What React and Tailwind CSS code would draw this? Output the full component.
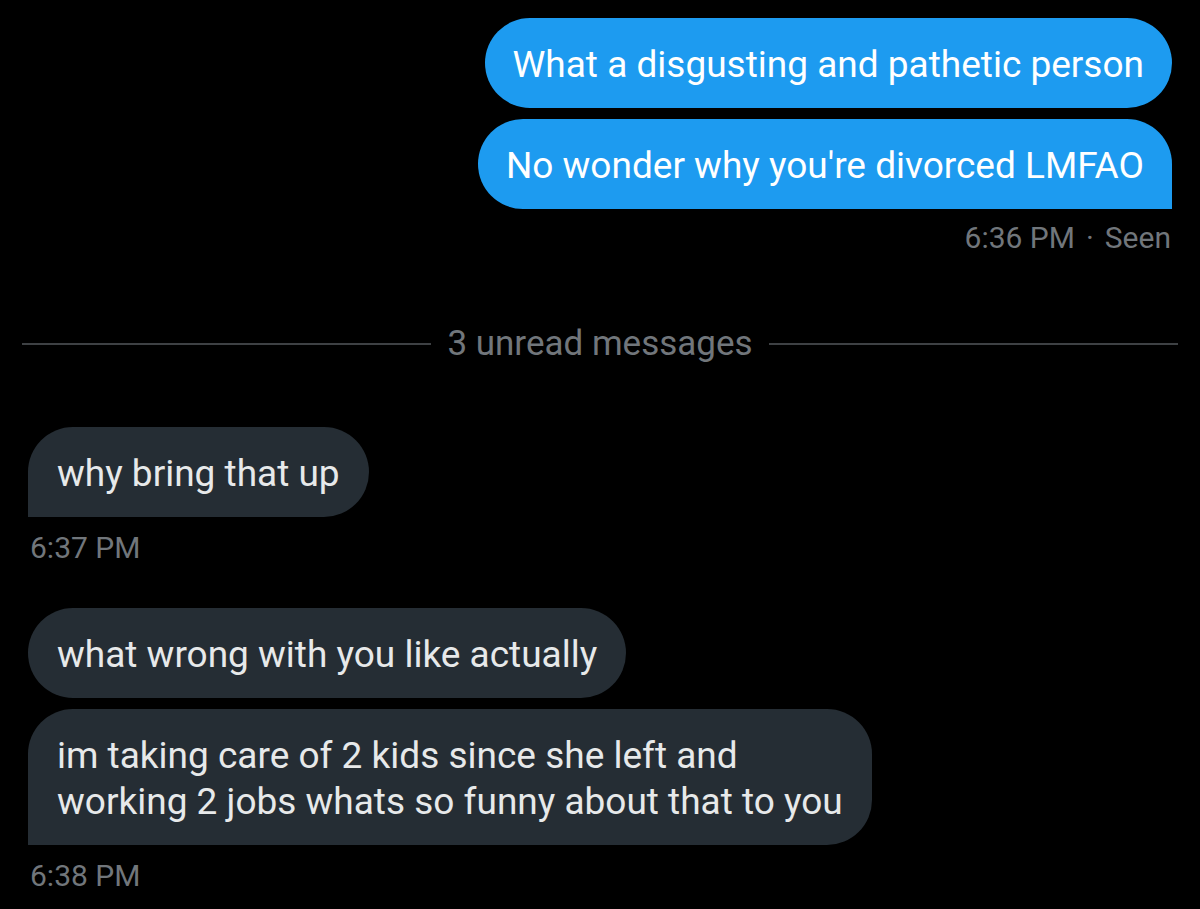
export default function App() {
  const font = { fontFamily: "Roboto, 'Liberation Sans', sans-serif" };
  return (
    <div className="w-[1200px] h-[909px] bg-black overflow-hidden" style={font}>
      <div className="flex flex-col pt-[18px]">
        {/* sent */}
        <div className="flex flex-col items-end pr-[28px] gap-[11px]">
          <div className="bg-[#1d9bf0] text-white rounded-[45px] px-[28px] pt-[23px] pb-[19px] text-[37px] leading-[48px]">
            What a disgusting and pathetic person
          </div>
          <div className="bg-[#1d9bf0] text-white rounded-[45px] rounded-br-none px-[28px] pt-[23px] pb-[19px] text-[37px] leading-[48px]">
            No wonder why you're divorced LMFAO
          </div>
        </div>
        <div className="flex justify-end pr-[29px] mt-[12px] text-[#71767b] text-[30px] leading-[34px]">
          <span>6:36 PM</span>
          <span className="mx-[11px]">·</span>
          <span>Seen</span>
        </div>

        {/* divider */}
        <div className="flex items-center gap-[16px] px-[22px] mt-[69px]">
          <div className="flex-1 h-[2px] bg-[#3e4144]" />
          <div className="text-[#71767b] text-[35px] leading-[40px]">3 unread messages</div>
          <div className="flex-1 h-[2px] bg-[#3e4144]" />
        </div>

        {/* received */}
        <div className="flex flex-col items-start pl-[28px] mt-[63px]">
          <div className="bg-[#252d34] text-[#e7e9ea] rounded-[45px] rounded-bl-none px-[29px] pt-[23px] pb-[19px] text-[37px] leading-[48px]">
            why bring that up
          </div>
        </div>
        <div className="pl-[30px] mt-[14px] text-[#71767b] text-[30px] leading-[34px]">6:37 PM</div>

        <div className="flex flex-col items-start pl-[28px] mt-[43px] gap-[11px]">
          <div className="bg-[#252d34] text-[#e7e9ea] rounded-[45px] px-[29px] pt-[23px] pb-[19px] text-[37px] leading-[48px]">
            what wrong with you like actually
          </div>
          <div className="bg-[#252d34] text-[#e7e9ea] rounded-[45px] rounded-bl-none px-[29px] pt-[24px] pb-[20px] text-[37px] leading-[46px]">
            im taking care of 2 kids since she left and
            <br />
            working 2 jobs whats so funny about that to you
          </div>
        </div>
        <div className="pl-[30px] mt-[14px] text-[#71767b] text-[30px] leading-[34px]">6:38 PM</div>
      </div>
    </div>
  );
}
